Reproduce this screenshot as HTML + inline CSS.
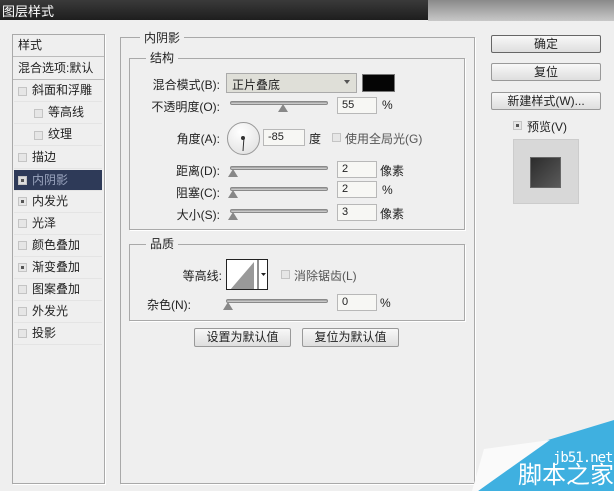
<!DOCTYPE html>
<html><head><meta charset="utf-8"><style>
*{margin:0;padding:0;box-sizing:border-box}
body{width:614px;height:491px;background:#efefef;position:relative;overflow:hidden;font-family:"Liberation Sans","Noto Sans CJK SC",sans-serif;font-size:12px;color:#222}
.a{position:absolute;white-space:nowrap}
.tb{left:0;top:0;width:614px;height:20px;background:linear-gradient(#3a3a3a,#1e1e1e)}
.tb2{left:428px;top:0;width:186px;height:21px;background:linear-gradient(#8a8a8a,#c8c8c8)}
.box{border:1px solid #a9a9a9;box-shadow:1px 1px 0 #fff}
.lbl{text-align:right;width:110px}
.chk{width:9px;height:9px;border:1px solid #c4c4c4;background:#e6e6e6}
.chk.on::after{content:"";position:absolute;left:2px;top:2px;width:3px;height:3px;background:#555}
.trk{height:4px;background:linear-gradient(#999,#d8d8d8);border:1px solid #8a8a8a;border-radius:2px}
.thumb{width:0;height:0;border-left:5px solid transparent;border-right:5px solid transparent;border-bottom:8px solid #888}
.in{background:#f7f7f4;border:1px solid #b8b8b8;height:17px;padding:1px 4px;font-size:11px}
.btn{border:1px solid #999;background:linear-gradient(#f8f8f8,#dedede);text-align:center;border-radius:2px;font-size:12px;line-height:16px}
.row{left:14px;width:88px;height:22px;border-bottom:1px solid #e4e4e4;padding-left:18px;line-height:21px}
</style></head><body>
<div class="a tb"></div><div class="a tb2"></div>
<div class="a" style="left:2px;top:1px;color:#fff;font-size:13px">图层样式</div>

<div class="a box" style="left:12px;top:34px;width:93px;height:450px;background:#efefef"></div>
<div class="a" style="left:13px;top:35px;width:91px;height:22px;border-bottom:1px solid #bbb;padding-left:5px;line-height:20px">样式</div>
<div class="a" style="left:13px;top:57px;width:91px;height:23px;border-bottom:1px solid #bbb;padding-left:5px;line-height:22px">混合选项:默认</div>
<div class="a row" style="top:80px">斜面和浮雕</div>
<div class="a row" style="top:102px;padding-left:34px">等高线</div>
<div class="a row" style="top:124px;padding-left:34px">纹理</div>
<div class="a row" style="top:147px">描边</div>
<div class="a row" style="top:170px;background:#2e3a58;color:#9aa4be;height:21px">内阴影</div>
<div class="a row" style="top:191px">内发光</div>
<div class="a row" style="top:213px">光泽</div>
<div class="a row" style="top:235px">颜色叠加</div>
<div class="a row" style="top:257px">渐变叠加</div>
<div class="a row" style="top:279px">图案叠加</div>
<div class="a row" style="top:301px">外发光</div>
<div class="a row" style="top:323px">投影</div>
<div class="a chk" style="left:18px;top:87px"></div>
<div class="a chk" style="left:34px;top:109px"></div>
<div class="a chk" style="left:34px;top:131px"></div>
<div class="a chk" style="left:18px;top:153px"></div>
<div class="a chk on" style="left:18px;top:176px;background:#ddd"></div>
<div class="a chk on" style="left:18px;top:197px"></div>
<div class="a chk" style="left:18px;top:219px"></div>
<div class="a chk" style="left:18px;top:241px"></div>
<div class="a chk on" style="left:18px;top:263px"></div>
<div class="a chk" style="left:18px;top:285px"></div>
<div class="a chk" style="left:18px;top:307px"></div>
<div class="a chk" style="left:18px;top:329px"></div>

<div class="a box" style="left:120px;top:37px;width:355px;height:447px"></div>
<div class="a" style="left:140px;top:29px;background:#efefef;padding:0 4px">内阴影</div>
<div class="a box" style="left:129px;top:58px;width:336px;height:172px"></div>
<div class="a" style="left:146px;top:49px;background:#efefef;padding:0 4px">结构</div>

<div class="a lbl" style="left:110px;top:76px">混合模式(B):</div>
<div class="a" style="left:226px;top:73px;width:131px;height:20px;background:#dfdfd8;border:1px solid #aaa;padding:2px 5px">正片叠底</div>
<div class="a" style="left:344px;top:80px;border-left:3px solid transparent;border-right:3px solid transparent;border-top:4px solid #555"></div>
<div class="a" style="left:362px;top:74px;width:33px;height:18px;background:#050505;border:1px solid #777"></div>

<div class="a lbl" style="left:110px;top:98px">不透明度(O):</div>
<div class="a trk" style="left:230px;top:101px;width:98px"></div>
<div class="a thumb" style="left:278px;top:104px"></div>
<div class="a in" style="left:337px;top:97px;width:40px">55</div>
<div class="a" style="left:382px;top:98px">%</div>

<div class="a lbl" style="left:110px;top:130px">角度(A):</div>
<div class="a" style="left:227px;top:122px;width:33px;height:33px;border-radius:50%;border:1px solid #999;background:radial-gradient(circle at 40% 30%,#fff,#ddd)"></div>
<div class="a" style="left:243px;top:137px;width:1px;height:14px;background:#333;transform:rotate(4deg)"></div>
<div class="a" style="left:241px;top:136px;width:4px;height:4px;border-radius:50%;background:#333"></div>
<div class="a in" style="left:263px;top:129px;width:42px">-85</div>
<div class="a" style="left:309px;top:130px">度</div>
<div class="a chk" style="left:332px;top:133px"></div>
<div class="a" style="left:345px;top:130px;color:#555">使用全局光(G)</div>

<div class="a lbl" style="left:110px;top:162px">距离(D):</div>
<div class="a trk" style="left:230px;top:166px;width:98px"></div>
<div class="a thumb" style="left:228px;top:169px"></div>
<div class="a in" style="left:337px;top:161px;width:40px">2</div>
<div class="a" style="left:380px;top:162px">像素</div>

<div class="a lbl" style="left:110px;top:184px">阻塞(C):</div>
<div class="a trk" style="left:230px;top:187px;width:98px"></div>
<div class="a thumb" style="left:228px;top:190px"></div>
<div class="a in" style="left:337px;top:181px;width:40px">2</div>
<div class="a" style="left:382px;top:183px">%</div>

<div class="a lbl" style="left:110px;top:206px">大小(S):</div>
<div class="a trk" style="left:230px;top:209px;width:98px"></div>
<div class="a thumb" style="left:228px;top:212px"></div>
<div class="a in" style="left:337px;top:204px;width:40px">3</div>
<div class="a" style="left:380px;top:205px">像素</div>

<div class="a box" style="left:129px;top:244px;width:336px;height:77px"></div>
<div class="a" style="left:146px;top:235px;background:#efefef;padding:0 4px">品质</div>
<div class="a lbl" style="left:112px;top:267px">等高线:</div>
<div class="a" style="left:226px;top:259px;width:42px;height:31px;border:1px solid #222;background:#fff;overflow:hidden">
<svg width="42" height="31" style="position:absolute;left:0;top:0"><polygon points="3,30 27,2 27,30" fill="#999"/><line x1="31" y1="0" x2="31" y2="31" stroke="#222"/><polygon points="34,13 39,13 36.5,16" fill="#222"/></svg></div>
<div class="a chk" style="left:281px;top:270px"></div>
<div class="a" style="left:294px;top:267px;color:#555">消除锯齿(L)</div>
<div class="a" style="left:147px;top:296px">杂色(N):</div>
<div class="a trk" style="left:226px;top:299px;width:102px"></div>
<div class="a thumb" style="left:223px;top:302px"></div>
<div class="a in" style="left:337px;top:294px;width:40px">0</div>
<div class="a" style="left:380px;top:296px">%</div>

<div class="a btn" style="left:194px;top:328px;width:97px;height:19px">设置为默认值</div>
<div class="a btn" style="left:302px;top:328px;width:97px;height:19px">复位为默认值</div>

<div class="a btn" style="left:491px;top:35px;width:110px;height:18px;border-color:#666">确定</div>
<div class="a btn" style="left:491px;top:63px;width:110px;height:18px">复位</div>
<div class="a btn" style="left:491px;top:92px;width:110px;height:18px">新建样式(W)...</div>
<div class="a chk on" style="left:513px;top:121px"></div>
<div class="a" style="left:527px;top:118px">预览(V)</div>
<div class="a" style="left:513px;top:139px;width:66px;height:65px;background:#d8d8d8;border:1px solid #ccc"></div>
<div class="a" style="left:530px;top:157px;width:31px;height:31px;background:linear-gradient(135deg,#2c2c2c,#5a5a5a);border:1px solid #666"></div>

<svg class="a" style="left:450px;top:400px" width="164" height="91"><polygon points="164,20 164,91 28,91 98,40" fill="#3fb0e0"/><polygon points="34,49 100,40 28,91 22,91" fill="#fafafa"/></svg>
<div class="a" style="left:553px;top:450px;color:#fff;font-size:14px;font-family:'DejaVu Sans Mono',monospace;letter-spacing:-1px">jb51.net</div>
<div class="a" style="left:518px;top:462px;color:#fff;font-size:24px;line-height:28px">脚本之家</div>
</body></html>
